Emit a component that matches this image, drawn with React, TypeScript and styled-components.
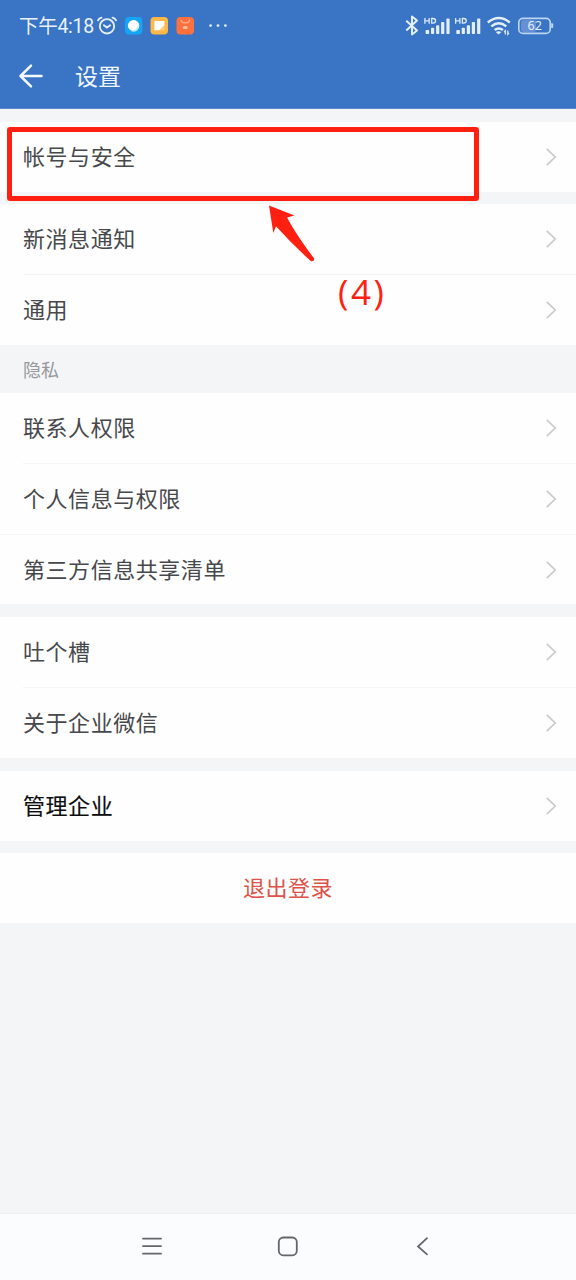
import React from 'react';
import styled, { createGlobalStyle } from 'styled-components';

const GlobalStyle = createGlobalStyle`
  * { box-sizing: border-box; }
  body {
    margin: 0;
    background: #f3f5f7;
    font-family: 'Noto Sans CJK SC', sans-serif;
  }
`;

const Screen = styled.div`
  position: relative;
  display: flex;
  flex-direction: column;
  width: 576px;
  height: 1280px;
  overflow: hidden;
  background: #f3f5f7;
`;

const Header = styled.header`
  height: 109px;
  background: #3974c5;
  border-bottom: 1px solid #5888cb;
  color: #e9f2fd;
`;

const StatusBar = styled.div`
  display: flex;
  justify-content: space-between;
  height: 52px;
  padding: 0 21px 0 19px;
`;

const StatusGroup = styled.div`
  display: flex;
  align-items: center;

  svg { display: block; flex: none; }
`;

const Clock = styled.span`
  width: 77px;
  padding-top: 2px;
  font-family: Roboto, 'Noto Sans CJK SC', sans-serif;
  font-size: 19.5px;
  letter-spacing: -0.3px;
  line-height: 24px;
  white-space: nowrap;
`;

const TitleBar = styled.div`
  display: flex;
  align-items: center;
  height: 48px;
  padding-left: 18px;
`;

const Title = styled.h1`
  margin: 0 0 0 31px;
  padding-bottom: 3px;
  font-size: 23px;
  font-weight: 400;
  line-height: 30px;
  color: #f0f6fd;
`;

const List = styled.main`
  display: flex;
  flex-direction: column;
  gap: 13px;
  padding-top: 13px;
`;

const Group = styled.section<{ $pullUp?: number }>`
  margin-top: ${({ $pullUp = 0 }) => -$pullUp}px;
  background: #fefefe;
`;

const Row = styled.div<{ $strong?: boolean; $height?: number }>`
  display: flex;
  align-items: center;
  justify-content: space-between;
  height: ${({ $height = 70 }) => $height}px;
  padding: 0 19px 0 23px;
  color: ${({ $strong }) => ($strong ? '#0c0d0f' : '#46484c')};
  font-size: 22px;
  letter-spacing: 0.55px;
  line-height: 32px;
  -webkit-text-stroke: ${({ $strong }) => ($strong ? '0.15px #0c0d0f' : '0')};
`;

const Label = styled.span`
  padding-bottom: 4px;
`;

const Divider = styled.div<{ $full?: boolean }>`
  height: 1px;
  margin-left: ${({ $full }) => ($full ? 0 : 23)}px;
  background: #f4f5f6;
`;

const SectionLabel = styled.div`
  display: flex;
  align-items: center;
  height: 48px;
  margin: -13px 0;
  padding: 0 0 1px 23px;
  color: #96989b;
  font-size: 18px;
`;

const LogoutRow = styled.div`
  display: flex;
  align-items: center;
  justify-content: center;
  height: 70px;
  margin-top: -1px;
  background: #fefefe;
  color: #dd5347;
  font-size: 22px;
  line-height: 32px;
  letter-spacing: 0.5px;
`;

const NavBar = styled.nav`
  height: 67px;
  margin-top: auto;
  padding: 22px 137px 0 136px;
  display: flex;
  justify-content: space-between;
  align-items: flex-start;
  border-top: 1px solid #eff0f2;
  background: #fbfcfe;
`;

const Highlight = styled.div`
  position: absolute;
  left: 7px;
  top: 127px;
  width: 472px;
  height: 74px;
  border: 5px solid #ff2012;
  border-radius: 3px;
`;

const ArrowMark = styled.svg`
  position: absolute;
  left: 264px;
  top: 200px;
`;

const StepLabel = styled.div`
  position: absolute;
  left: 338px;
  top: 268px;
  color: #ff2012;
  font-family: 'Open Sans', 'Noto Sans', sans-serif;
  font-size: 35px;
  line-height: 48px;
  letter-spacing: 2.6px;
`;

const Chevron = () => (
  <svg width="13" height="20" viewBox="0 0 13 20" fill="none" stroke="#c9cacc" strokeWidth="1.7">
    <path d="M2.8 1.8 11.2 10 2.8 18.2" />
  </svg>
);

const LeftStatusIcons = () => (
  <svg width="134" height="24" viewBox="96 14 134 24" fill="none">
    <g stroke="#e3eefb" strokeWidth="1.9" strokeLinecap="round">
      <circle cx="107" cy="26.3" r="7.2" />
      <path d="M98 20.3q1.1-2.2 3.5-2.7M116 20.3q-1.1-2.2-3.5-2.7M103.9 25.2l3 2.4 3.2-2.4" />
    </g>
    <rect x="125" y="17" width="17.3" height="17.5" rx="4" fill="#16a5f6" />
    <ellipse cx="133.6" cy="25.5" rx="5.7" ry="5.4" fill="#fff" />
    <path d="M129.5 30.7q7.2.6 9-6.3.8 7-5 7.4Z" fill="#b9e8fd" />
    <rect x="150.5" y="17" width="17.5" height="17.5" rx="4" fill="#ffb848" />
    <path d="M154.4 21h10v4.3l-5 5h-5z" fill="#fff" />
    <path d="M164.4 25.3v5h-5z" fill="#ffd07c" />
    <rect x="176.5" y="17" width="17.5" height="17.5" rx="4" fill="#fc713e" />
    <path d="M181 19.4q0 3.4 4.3 3.4t4.3-3.4" stroke="#ffb18b" strokeWidth="1.2" />
    <ellipse cx="185.2" cy="27.4" rx="2.5" ry="1.5" fill="#ffc5aa" />
    <g fill="#dceafa">
      <circle cx="210.6" cy="25.6" r="1.4" />
      <circle cx="218" cy="25.6" r="1.4" />
      <circle cx="225.4" cy="25.6" r="1.4" />
    </g>
  </svg>
);

const Signal = ({ x }: { x: number }) => (
  <g transform={`translate(${x} 0)`}>
    <path
      d="M.9 17.9v5.9M5.2 17.9v5.9M.9 20.9h4.3M7.7 18.5v4.7h1.2q2.7 0 2.7-2.35t-2.7-2.35z"
      stroke="#dceafa"
      strokeWidth="1.3"
    />
    <g fill="#e3eefb">
      <rect x="1.6" y="30" width="3.6" height="4" rx=".8" />
      <rect x="7" y="27.8" width="3.2" height="6.2" rx=".8" />
      <rect x="12.1" y="25.2" width="3.2" height="8.8" rx=".8" />
      <rect x="17.1" y="22" width="3.2" height="12" rx=".8" />
      <rect x="22.4" y="18.5" width="3.2" height="15.5" rx=".8" />
    </g>
  </g>
);

const RightStatusIcons = () => (
  <svg width="151" height="24" viewBox="404 14 151 24" fill="none">
    <path d="M406.3 20.8 417 30.5l-5 4V16.5l5 4L406.3 30.4" stroke="#e3eefb" strokeWidth="2" strokeLinejoin="round" />
    <Signal x={424} />
    <Signal x={454.7} />
    <g stroke="#e3eefb" strokeWidth="2.5">
      <path d="M487.8 22.5q11-9 22 0" />
      <path d="M491.3 26.4q7.5-6.2 15 0" />
      <path d="M494.7 30q4.1-3.1 8.2 0" />
    </g>
    <path d="m495.8 32 2.8 2.5 2.8-2.5q-2.8-1.5-5.6 0z" fill="#e3eefb" />
    <path d="M505.3 34.4v-3.8l-1.2 1.5M507.8 30.6v3.8l1.2-1.5" stroke="#e3eefb" strokeWidth="1.2" />
    <rect x="521" y="20" width="15" height="12" rx="2.5" fill="#6590d4" />
    <rect x="518.8" y="18.4" width="31.4" height="15" rx="4.2" stroke="#bdd4f2" strokeWidth="1.6" />
    <path d="M551.2 23.3h1q1 0 1 1v2.8q0 1-1 1h-1z" fill="#bdd4f2" />
    <text x="534.7" y="30.4" textAnchor="middle" fill="#e3eefb" fontFamily="Noto Sans" fontSize="12.6">62</text>
  </svg>
);

const BackArrow = () => (
  <svg width="26" height="26" viewBox="0 0 26 26" fill="none" stroke="#f5f9ff" strokeWidth="2.5" strokeLinecap="round" strokeLinejoin="round">
    <path d="M13 2.7 2.5 13 13 23.3M2.8 13h20.7" />
  </svg>
);

type SettingsGroup = {
  rows: string[];
  label?: string;
  strong?: boolean;
  pullUp?: number;
  fullDividerAfter?: number;
  lastRowHeight?: number;
};

const groups: SettingsGroup[] = [
  { rows: ['帐号与安全'] },
  { rows: ['新消息通知', '通用'], pullUp: 1 },
  { rows: ['联系人权限', '个人信息与权限', '第三方信息共享清单'], label: '隐私', fullDividerAfter: 1, lastRowHeight: 69 },
  { rows: ['吐个槽', '关于企业微信'] },
  { rows: ['管理企业'], strong: true },
];

export default function App() {
  return (
    <>
      <GlobalStyle />
      <Screen>
        <Header>
          <StatusBar>
            <StatusGroup>
              <Clock>下午4:18</Clock>
              <LeftStatusIcons />
            </StatusGroup>
            <StatusGroup>
              <RightStatusIcons />
            </StatusGroup>
          </StatusBar>
          <TitleBar>
            <BackArrow />
            <Title>设置</Title>
          </TitleBar>
        </Header>
        <List>
          {groups.map((group) => (
            <React.Fragment key={group.rows[0]}>
              {group.label && <SectionLabel>{group.label}</SectionLabel>}
              <Group $pullUp={group.pullUp}>
                {group.rows.map((label, i) => (
                  <React.Fragment key={label}>
                    {i > 0 && <Divider $full={group.fullDividerAfter === i - 1} />}
                    <Row
                      $strong={group.strong}
                      $height={i === group.rows.length - 1 ? group.lastRowHeight : undefined}
                    >
                      <Label>{label}</Label>
                      <Chevron />
                    </Row>
                  </React.Fragment>
                ))}
              </Group>
            </React.Fragment>
          ))}
          <LogoutRow>
            <Label>退出登录</Label>
          </LogoutRow>
        </List>
        <NavBar>
          <svg width="32" height="22" viewBox="0 0 32 22" stroke="#656669" strokeWidth="1.8" strokeLinecap="round">
            <path d="M7 2.6h18M7 10.1h18M7 17.7h18" />
          </svg>
          <svg width="32" height="22" viewBox="0 0 32 22" fill="none" stroke="#656669" strokeWidth="1.8">
            <rect x="6.8" y="1.5" width="18" height="17.8" rx="4.5" />
          </svg>
          <svg width="32" height="22" viewBox="0 0 32 22" fill="none" stroke="#656669" strokeWidth="1.8" strokeLinecap="round">
            <path d="M20 2.2 11 10.5 20 18.4" />
          </svg>
        </NavBar>
        <Highlight />
        <ArrowMark width="56" height="66" viewBox="264 200 56 66">
          <path d="M269 205.5 294.5 215.4 287 217.5Q297 236 314 258.3 314.7 261.8 311 261.3 292 244 276 226.2L273.3 233Z" fill="#ff2012" />
        </ArrowMark>
        <StepLabel>(4)</StepLabel>
      </Screen>
    </>
  );
}
